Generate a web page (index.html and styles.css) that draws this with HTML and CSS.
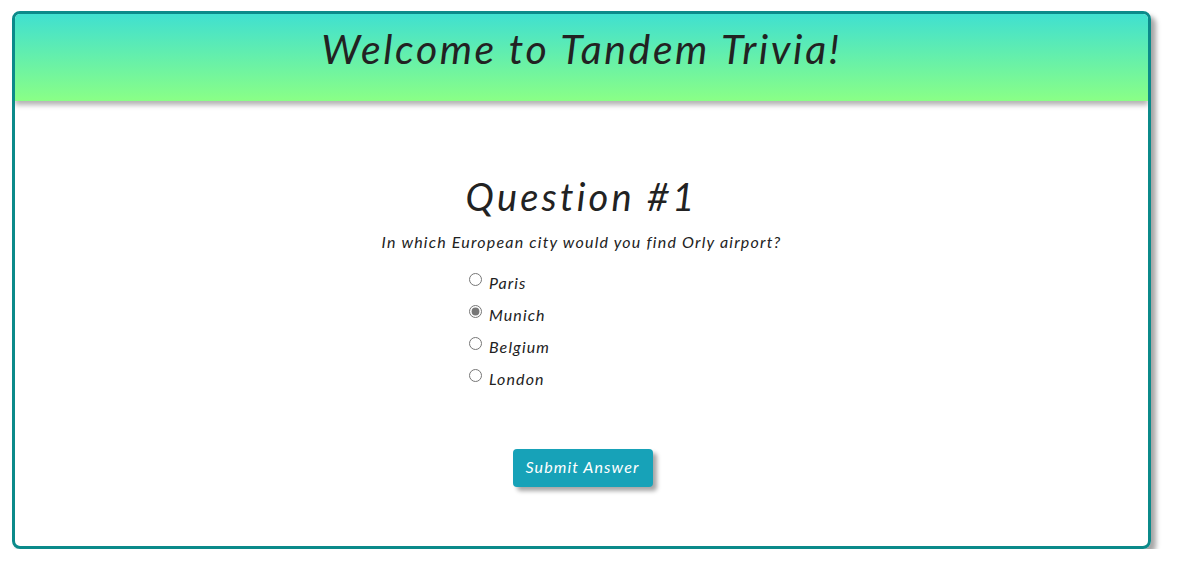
FILE: index.html
```html
<!DOCTYPE html>
<html lang="en">
<head>
<meta charset="utf-8">
<title>Tandem Trivia</title>
<link rel="stylesheet" href="styles.css">
</head>
<body>
<div class="card">
  <header class="header">
    <h1 class="title">Welcome to Tandem Trivia!</h1>
  </header>
  <main class="content">
    <h2 class="q-title">Question #1</h2>
    <p class="q-text">In which European city would you find Orly airport?</p>
    <form class="options">
      <label class="option"><input type="radio" name="a" value="Paris"><span>Paris</span></label>
      <label class="option"><input type="radio" name="a" value="Munich" checked><span>Munich</span></label>
      <label class="option"><input type="radio" name="a" value="Belgium"><span>Belgium</span></label>
      <label class="option"><input type="radio" name="a" value="London"><span>London</span></label>
    </form>
    <button class="submit" type="button">Submit Answer</button>
  </main>
</div>
</body>
</html>
```
FILE: styles.css
```css
html, body {
  margin: 0;
  padding: 0;
  background: #fff;
}
body {
  padding: 11px 27px 0 12px;
  font-family: Lato, "Open Sans", "DejaVu Sans", sans-serif;
  font-style: italic;
  color: #222;
}
.card {
  box-sizing: border-box;
  height: 538px;
  border: 3px solid #0b8a8a;
  border-radius: 8px;
  box-shadow: 5px 5px 5px rgba(0, 0, 0, 0.35);
  overflow: hidden;
  display: flex;
  flex-direction: column;
}
.header {
  position: relative;
  z-index: 1;
  height: 87px;
  flex: none;
  background: linear-gradient(#40e0d0, #8aff86);
  box-shadow: 0 4px 5px rgba(0, 0, 0, 0.3);
  text-align: center;
}
.title {
  margin: 0;
  padding-top: 11px;
  font-size: 41px;
  line-height: 48px;
  font-weight: normal;
  font-style: italic;
  letter-spacing: 2.6px;
}
.content {
  display: flex;
  flex-direction: column;
  align-items: center;
  padding-top: 71px;
}
.q-title {
  margin: 0;
  font-size: 38px;
  line-height: 48px;
  font-weight: normal;
  font-style: italic;
  letter-spacing: 3.2px;
}
.q-text {
  margin: 12px 0 0;
  font-size: 16px;
  line-height: 20px;
  letter-spacing: 1.2px;
}
.options {
  display: flex;
  flex-direction: column;
  gap: 12px;
  margin-top: 20px;
  align-self: flex-start;
  margin-left: 449px;
}
.option {
  display: flex;
  align-items: center;
  height: 20px;
  font-size: 16px;
  letter-spacing: 1.1px;
}
.option input {
  margin: -6px 7px 0 5px;
  width: 13px;
  height: 13px;
  accent-color: #777;
}
.submit {
  margin-top: 61px;
  margin-left: 2px;
  width: 140px;
  height: 38px;
  padding: 0 0 4px;
  border: none;
  border-radius: 4px;
  background: #17a2b8;
  color: #fff;
  font-family: inherit;
  font-style: italic;
  font-size: 16px;
  letter-spacing: 1.1px;
  box-shadow: 4px 4px 4px rgba(0, 0, 0, 0.35);
}
```
